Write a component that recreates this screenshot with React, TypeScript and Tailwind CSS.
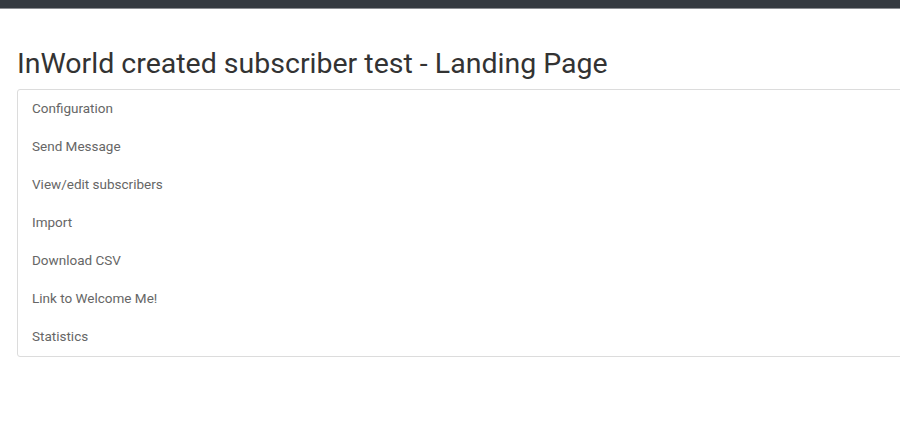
const items = [
  'Configuration',
  'Send Message',
  'View/edit subscribers',
  'Import',
  'Download CSV',
  'Link to Welcome Me!',
  'Statistics',
]

export default function App() {
  return (
    <div className="min-h-screen w-[900px] overflow-hidden bg-white font-['Roboto',sans-serif]">
      <div className="h-[9px] bg-[#343a40] border-b border-[#8a8d91]" />
      <div className="pl-[17px] pt-[38px]">
        <h1 className="text-[28.5px] leading-[34px] text-[#333] mb-[8px]">
          InWorld created subscriber test - Landing Page
        </h1>
        <div className="w-[1000px] border border-[#dcdcdc] rounded-[3px]">
          {items.map((item) => (
            <div key={item} className="px-[14px] pt-[8px] pb-[10px] text-[13.5px] leading-[20px] text-[#666]">
              {item}
            </div>
          ))}
        </div>
      </div>
    </div>
  )
}
